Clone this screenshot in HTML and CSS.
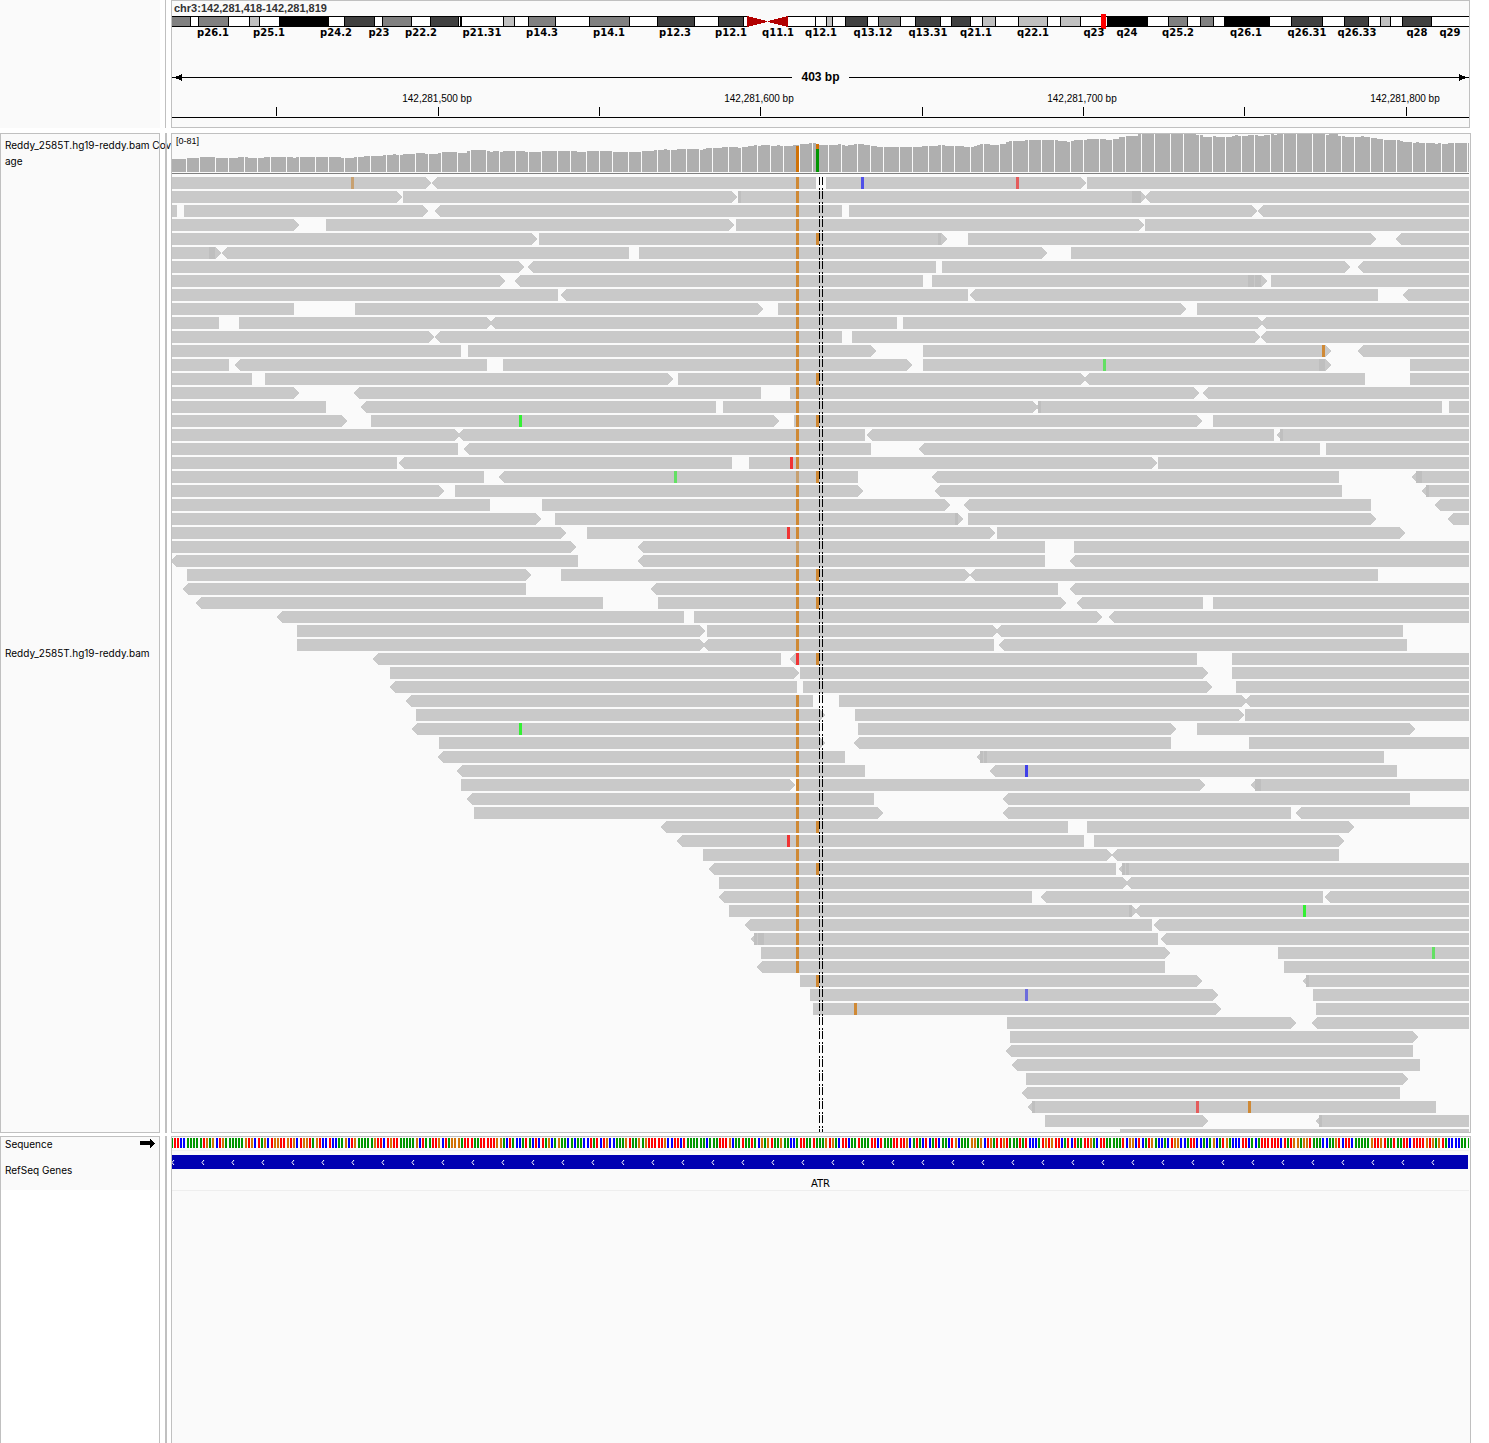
FILE: index.html
```html
<!DOCTYPE html>
<html lang="en">
<head>
<meta charset="utf-8">
<title>chr3:142,281,418-142,281,819</title>
<link rel="stylesheet" href="styles.css">
</head>
<body>
<main class="viewer">
  <section class="row row-head">
    <div class="names names-head"></div>
    <div class="divider divider-thin"></div>
    <div class="data data-head">
      <h1 class="locus">chr3:142,281,418-142,281,819</h1>
      <svg class="strip ideogram" id="ideogram" role="img" aria-label="Chromosome 3 ideogram"></svg>
      <div class="span">
        <svg class="span-arrow" viewBox="0 0 10 7"><path d="M0 3H4V2H7V1H9V0H10V7H9V6H7V5H4V4H0Z"/></svg>
        <span class="span-line"></span>
        <span class="span-text">403 bp</span>
        <span class="span-line"></span>
        <svg class="span-arrow" viewBox="0 0 10 7"><path d="M10 3H6V2H3V1H1V0H0V7H1V6H3V5H6V4H10Z"/></svg>
      </div>
      <svg class="strip ruler" id="ruler" role="img" aria-label="Base position ruler"></svg>
    </div>
  </section>

  <section class="row row-reads">
    <div class="names names-reads">
      <div class="name name-coverage">Reddy_2585T.hg19-reddy.bam Cov<br>age</div>
      <div class="name name-alignments">Reddy_2585T.hg19-reddy.bam</div>
    </div>
    <div class="divider"></div>
    <div class="data data-reads">
      <div class="coverage-box">
        <span class="range">[0-81]</span>
        <svg class="strip coverage" id="coverage" role="img" aria-label="Coverage"></svg>
      </div>
      <svg class="strip alignments" id="alignments" role="img" aria-label="Aligned reads"></svg>
    </div>
  </section>

  <section class="row row-features">
    <div class="names names-features">
      <div class="name name-sequence">
        <span>Sequence</span>
        <svg class="strand" viewBox="0 0 15 9"><path d="M0 2H10V0H11V1H12V2H13V3H14V4H15V5H14V6H13V7H12V8H11V9H10V6H0Z"/></svg>
      </div>
      <div class="name name-genes">RefSeq Genes</div>
    </div>
    <div class="divider"></div>
    <div class="data data-features">
      <svg class="strip sequence" id="sequence" role="img" aria-label="Sequence"></svg>
      <svg class="strip gene" id="gene" role="img" aria-label="ATR gene body"></svg>
      <div class="gene-name">ATR</div>
    </div>
  </section>
</main>
<script src="tracks.js"></script>
</body>
</html>
```

FILE: styles.css
```css
* {
  box-sizing: border-box;
}

body {
  margin: 0;
  background: #fff;
  color: #000;
  font-family: Inter, "Liberation Sans", sans-serif;
  font-size: 10px;
  line-height: 16px;
}

.viewer {
  display: flex;
  flex-direction: column;
  min-height: 100vh;
  padding-right: 18px;
}

.row {
  display: grid;
  grid-template-columns: 160px 2px minmax(0, 1fr);
  column-gap: 5px;
}

.row-head {
  margin-bottom: 5px;
}

.row-reads {
  margin-bottom: 3px;
}

.row-features {
  flex: 1;
}

.row > .data {
  margin-left: -1px;
}

.divider {
  background: #c0c0c0;
}

.divider-thin {
  width: 1px;
}

.names,
.data {
  border: 1px solid #c0c0c0;
  background: #fafafa;
}

.names-head {
  border: 0;
}

.data {
  position: relative;
}

.row > .data-head {
  margin-right: 1px;
}

.strip {
  display: block;
  width: 100%;
}

.locus {
  margin: 0;
  padding: 0 2px;
  height: 13px;
  font: bold 11px/14px "Liberation Sans", sans-serif;
  color: #333;
}

.ideogram {
  height: 30px;
}

.band-label {
  font: bold 10px "DejaVu Sans", sans-serif;
  text-anchor: middle;
}

.span {
  display: flex;
  align-items: center;
  height: 20px;
  margin-top: 23px;
}

.span-arrow {
  width: 10px;
  height: 7px;
}

.span-line {
  flex: 1;
  height: 1px;
  background: #000;
}

.span-text {
  width: 57px;
  font: bold 12px/20px "Liberation Sans", sans-serif;
  text-align: center;
}

.ruler {
  height: 40px;
}

.tick-label {
  font: 10px "Liberation Sans", sans-serif;
  text-anchor: middle;
}

.names-reads {
  display: flex;
  flex-direction: column;
}

.name {
  padding-left: 4px;
  white-space: nowrap;
}

.name-coverage {
  height: 40px;
  padding-top: 3px;
}

.name-alignments {
  flex: 1;
  display: flex;
  align-items: center;
}

.data-reads,
.data-features {
  padding-right: 1px;
}

.range {
  position: absolute;
  left: 4px;
  top: 0;
  font: 9px/14px "Liberation Sans", sans-serif;
}

.coverage {
  height: 40px;
}

.alignments {
  height: 958px;
}

.row-features > .names,
.row-features > .data {
  border-bottom: 0;
}

.names-features {
  background: linear-gradient(#fafafa 53px, #fff 53px);
  line-height: 14px;
}

.name-sequence {
  display: flex;
  justify-content: space-between;
  padding-right: 4px;
  height: 26px;
}

.strand {
  width: 15px;
  height: 9px;
  margin-top: 2px;
}

.sequence {
  height: 18px;
}

.gene {
  height: 14px;
}

.gene-name {
  height: 22px;
  padding-top: 8px;
  border-bottom: 1px solid #eee;
  font: 10px/13px "DejaVu Sans", sans-serif;
  text-align: center;
}
```

FILE: tracks.js
```js
// Drawing units: the visible window starts at 172 and is 1297 units wide.
const LEFT = 172;
const WIDTH = 1297;
const BASE = WIDTH / 402;
const NS = 'http://www.w3.org/2000/svg';

function canvas(id, top, height) {
  const svg = document.createElementNS(NS, 'svg');
  svg.setAttribute('viewBox', `${LEFT} ${top} ${WIDTH} ${height}`);
  svg.setAttribute('preserveAspectRatio', 'none');
  svg.setAttribute('width', '100%');
  svg.setAttribute('height', height);
  svg.setAttribute('shape-rendering', 'crispEdges');
  document.getElementById(id).append(svg);
  return svg;
}

const box = (x, y, w, h, fill) => `<rect x="${x}" y="${y}" width="${w}" height="${h}" fill="${fill}"/>`;

function labels(id, className, y, items) {
  document.getElementById(id).insertAdjacentHTML('beforeend', items.map(([text, x]) =>
    `<text class="${className}" x="${(x - LEFT) / WIDTH * 100}%" y="${y}">${text}</text>`).join(''));
}

// Ideogram
const stains = { w: '#fff', l: '#c0c0c0', g: '#808080', d: '#404040', k: '#000' };
const bands = `171g190w198g228w249l259w279k328w344d374w382g411w430d458w460k461w503l514w528g555w589g629w657d694w718d743w747
787w815w826l832w845d867w878g900w915d940w951d970w982l995w1018l1047w1060l1080w1107k1147w1168g1187w1200g1213w1224k1269w1291d1322w1344d1368w1380l1390w1402d1431w1469`;
let out = '';
for (const arm of bands.split('\n')) {
  const edges = arm.match(/\d+/g).map(Number);
  const fills = arm.match(/[a-z]/g);
  fills.forEach((f, i) => {
    const x = edges[i];
    const w = edges[i + 1] - x;
    if (w > 0) out += box(x, 16, w + 1, 11, '#000') + box(x + 1, 17, w - 1, 9, stains[f]);
  });
}
out += '<path d="M747 16L767 21V22L747 27ZM788 16L768 21V22L788 27Z" fill="#b20000"/>';
out += box(1101, 14, 5, 15, '#f00');
canvas('ideogram', 14, 30).innerHTML = out;
labels('ideogram', 'band-label', 22, [
  ['p26.1', 213], ['p25.1', 269], ['p24.2', 336], ['p23', 379], ['p22.2', 421], ['p21.31', 482],
  ['p14.3', 542], ['p14.1', 609], ['p12.3', 675], ['p12.1', 731], ['q11.1', 778], ['q12.1', 821],
  ['q13.12', 873], ['q13.31', 928], ['q21.1', 976], ['q22.1', 1033], ['q23', 1094], ['q24', 1127],
  ['q25.2', 1178], ['q26.1', 1246], ['q26.31', 1307], ['q26.33', 1357], ['q28', 1417], ['q29', 1450]]);

// Ruler
canvas('ruler', 87, 40).innerHTML =
  [276, 438, 599, 760, 922, 1083, 1244, 1406].map(x => box(x, 107, 1, 9, '#000')).join('') +
  box(LEFT, 117, WIDTH, 1, '#000');
labels('ruler', 'tick-label', 15, [
  ['142,281,500 bp', 437], ['142,281,600 bp', 759], ['142,281,700 bp', 1082], ['142,281,800 bp', 1405]]);

// Coverage: "x:top" steps
const steps = `172:159 186:158 199:157 215:158 238:157 248:158 265:157 293:158 296:157 341:158 354:157 364:156
384:155 393:154 397:155 403:154 415:153 425:154 438:153 441:152 458:153 467:151 470:150 487:151 490:152 494:151 500:152
503:151 525:152 541:151 577:152 586:151 612:152 641:151 654:150 664:149 668:150 677:149 700:150 704:149 706:148 722:147
738:148 742:147 748:146 754:145 757:146 761:145 772:146 776:145 780:146 793:145 800:144 809:143 816:145 838:144 841:145
845:146 848:145 854:144 864:145 871:146 877:147 922:146 938:145 945:146 963:147 973:146 976:145 980:144 990:145 1000:144
1006:142 1009:141 1025:140 1058:141 1067:142 1070:141 1074:140 1087:139 1106:140 1113:139 1119:137 1126:136 1138:134
1196:135 1203:137 1213:136 1216:137 1232:136 1235:135 1238:136 1248:135 1258:136 1264:135 1271:134 1274:135 1277:134
1326:135 1329:134 1338:136 1345:137 1361:136 1364:137 1371:138 1377:139 1384:140 1400:141 1403:142 1413:143 1416:142
1419:143 1435:144 1438:143 1442:144 1448:143`.split(/\s+/).map(s => s.split(':').map(Number));
const topAt = x => steps.filter(s => s[0] <= x + 1).pop()?.[1] ?? 159;
out = '';
for (let i = 0; i < 403; i++) {
  const x = LEFT - 1 + Math.floor(i * BASE);
  const y = topAt(x);
  out += box(x, y, 3, 172 - y, '#afafaf');
}
out += box(796, 146, 3, 26, '#d17105') + box(816, 144, 3, 5, '#d17105') + box(816, 149, 3, 23, '#009600');
out += box(LEFT, 173, WIDTH, 1, '#808080');
canvas('coverage', 134, 40).innerHTML = out;

// Reads: "<" or ">" marks the pointed end; a letter and position is a mismatch; q is low quality
const reads = `172-431> <431-816 826-1086> 1087-1469 t351 o796 b861 p1016
172-402> 403-737> 738-1146> <1144-1469 q1132+9 q738+3 o796
172-177 184-428> <434-842 849-1257> <1257-1469 o796
172-299> 326-734> 736-1144> 1145-1469 o796
172-537> 539-947> 968-1376> <1395-1469 q938+3 o796 o816
172-221> <221-629 639-1047> 1071-1469 q209+6 o796
172-524> <527-936 942-1350> <1357-1469 o796
172-505> <514-923 932-1267> 1271-1469 q1248+6 q1255+6 o796
172-558 <560-968 <969-1378 <1402-1469 o796
172-294 355-763> 778-1186> 1197-1469 o796
172-219 239-492> <489-897 903-1263> <1260-1469 o796
172-434> <434-842 852-1260> <1260-1469 o796
172-461 468-876> 923-1331> <1357-1469 o796 o1322
172-229 <234-487 503-912> 923-1331> 1410-1469 q1319+6 o796 h1103
172-252 265-673> 678-1086> <1083-1365 1410-1469 o796 o816
172-299> <353-761 790-1199> <1202-1469 o796
172-326 <360-716 723-1038> <1035-1442 1449-1469 q1038+3 o796
172-347> 371-779> 794-1202> 1213-1469 g519 o796 o816
172-460> <457-865 <866-1274 <1276-1469 q1280+3 o796
172-458 <463-871 <918-1320 1326-1469 o796
172-397 <398-732 749-1157> 1158-1469 r790 o796
172-484 <498-858 <931-1339 <1411-1469 q1416+6 h674 t796 o816
172-444> 455-863> <934-1342 <1421-1469 q1426+3 o796
172-490 542-950> <963-1371 <1434-1469 o796
172-541> 555-963> 968-1376> <1447-1469 q955+3 o796
172-566> 587-995> 997-1405> r787 o796
172-576> <637-1045 1074-1469 t796
<170-578 <637-1045 <1069-1469 o796
187-531> 561-970> <969-1378 o796 o816
<182-526 <650-1058 <1069-1469 o796
<195-603 658-1066> <1076-1203 1213-1469 o796 o816
<276-684 694-1102> <1108-1469 o796
297-705> 707-998> <995-1403 o796
297-705> <702-994 <998-1407 o796
<372-781 <789-1197 1232-1469 r796 o816
390-799> 800-1208> 1232-1469
<389-797 803-1212> 1236-1469
<405-813 839-1247> <1244-1469 o796
416-825> 855-1244> 1245-1469 o796
<411-820 858-1176> 1197-1415> g519 o796
439-825> <853-1171 1249-1469 o796
<437-845 <976-1384 q980+3 q984+3 o796
<456-865 <989-1397 o796 n1025
461-795> 796-1205> <1250-1469 q1255+6 o796
<466-874 <1002-1410 o796
474-883> <1002-1291 <1295-1469 o796
<660-1068 1087-1354> o796 o816
<676-1084 1094-1344> r787 o796
703-1112> <1111-1339 o796
<708-1116 <1118-1469 q1122+3 q1126+3 o796 o816
719-1128> <1125-1469 o796
<718-1032 <1040-1323 <1324-1469 o796
729-1137> <1134-1469 q1129+3 o796 g1303
<744-1152 <1153-1469 o796
<750-1158 <1160-1469 q754+3 q758+6 o796
761-1170> 1278-1469 o796 h1432
<756-1165 1284-1469 o796
800-1202> <1302-1469 q1306+3 o816
810-1218> 1313-1469 m1025
813-1221> 1316-1469 o854
1007-1296> <1311-1469
1010-1418>
<1005-1413
<1011-1420
1026-1408>
<1021-1400
<1027-1436 q1032+3 p1196 o1248
1045-1208> <1315-1469 q1319+3
1120-1469`.split('\n');
const inks = { o: '#cf8935', t: '#c7a070', b: '#5050e8', n: '#4040e8', m: '#6c6cdc', p: '#e45c5c', r: '#f03434', g: '#34f034', h: '#64e064' };
out = '';
reads.forEach((line, row) => {
  const y = 177 + row * 14;
  for (const item of line.split(' ')) {
    const [a, b] = item.match(/\d+/g).map(Number);
    if (item[0] === 'q') out += box(a, y, b, 12, '#bfbfbf');
    else if (inks[item[0]]) out += box(a, y, 3, 12, inks[item[0]]);
    else {
      const left = item[0] === '<' ? a + 1 : a;
      const l = item[0] === '<' ? 5 : 0;
      const r = item.endsWith('>') ? 5 : 0;
      out += `<path d="M${left} ${y + 6}L${left + l} ${y}H${b - r}L${b} ${y + 6}L${b - r} ${y + 12}H${left + l}Z" fill="#c9c9c9"/>`;
    }
  }
});
for (const x of [819, 822]) {
  out += `<path d="M${x}.5 177V1132" stroke="#000" stroke-dasharray="8 3 2 1"/>`;
}
canvas('alignments', 174, 958).innerHTML = out;

// Reference sequence: one letter for the colour of each base, grouped where rounding leaves a wider gap
const groups = `GRRBB GGGG GROGO BROG GGGGG OROB RGOB ROORR OROB ROORG ORBB RBBGG OBRO GGGG GORRB RORR GGGGG OBRG GRRO
BRGOO OGRR RGGRR RRRO OGBRG BBGR GBRB RGOBG OGGB GBGGB BRGR BROB BGGGO RGGO GORRR RROB BRRBR GGGG GGBGB
GGRR OBGG RGGRG BOGO RGGO GGBBG RRGG RGGGO ROGB RRBGG RGGG RRBR GGGRR RROB GRGBR BGRB GGBR OBGGG OOGO
BROGR RORG GGRGR BBBG RORO RRBGR BRGG RROGB RRGG GGGR BOOBR BGRO GBBGB ROOB BGRRB BGBG OBGR OGBBB RRBG
BGRRR RRRB RGRO OGOOR GGGB BGGOR BRRB GGGGG ORRO RGGR GGRRB RRRR OROGO RGBB BBGG G`.split(/\s+/);
const dyes = { G: '#009600', R: '#f00', B: '#00f', O: '#d17105' };
out = '';
let group = 0;
let place = 0;
for (let i = 0, last = 0; i < 403; i++) {
  const x = Math.floor(i * BASE);
  if (x - last > 3) {
    group++;
    place = 0;
  }
  const letters = groups[Math.min(group, groups.length - 1)];
  out += box(LEFT - 1 + x, 1138, 2, 10, dyes[letters[Math.min(place, letters.length - 1)]]);
  place++;
  last = x;
}
out += box(LEFT, 1150, WIDTH, 1, '#f0f0f0');
canvas('sequence', 1137, 18).innerHTML = out;

// Gene body with strand chevrons
out = box(LEFT, 1155, WIDTH - 1, 14, '#0000b2');
for (let x = 171; x < 1440; x += 30) {
  out += `<path d="M${x + 3} 1160L${x + 1} 1162.5L${x + 3} 1165" fill="none" stroke="#fff" shape-rendering="auto"/>`;
}
canvas('gene', 1155, 14).innerHTML = out;
```
